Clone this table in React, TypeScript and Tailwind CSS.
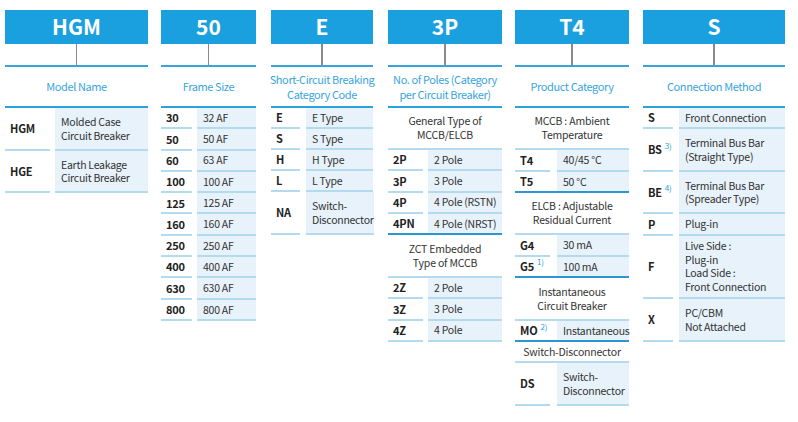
import React from 'react';

type Row =
  | { kind: 'row'; code: string; sup?: string; desc: string[]; h: number; end?: 'dark' }
  | { kind: 'sec'; text: string[]; h: number; end?: 'dark' };

type Column = {
  head: string;
  title: string[];
  w: number;
  ml: number;
  codeW: number;
  gap: number;
  rows: Row[];
};

const r = (code: string, desc: string[], h = 21.3, sup?: string, end?: 'dark'): Row => ({
  kind: 'row',
  code,
  desc,
  h,
  sup,
  end,
});
const s = (text: string[], h: number, end?: 'dark'): Row => ({ kind: 'sec', text, h, end });

const columns: Column[] = [
  {
    head: 'HGM',
    title: ['Model Name'],
    w: 143,
    ml: 5,
    codeW: 45,
    gap: 5,
    rows: [
      r('HGM', ['Molded Case', 'Circuit Breaker'], 43),
      r('HGE', ['Earth Leakage', 'Circuit Breaker'], 42),
    ],
  },
  {
    head: '50',
    title: ['Frame Size'],
    w: 95,
    ml: 13,
    codeW: 31,
    gap: 5,
    rows: [
      ['30', '32 AF'],
      ['50', '50 AF'],
      ['60', '63 AF'],
      ['100', '100 AF'],
      ['125', '125 AF'],
      ['160', '160 AF'],
      ['250', '250 AF'],
      ['400', '400 AF'],
      ['630', '630 AF'],
      ['800', '800 AF'],
    ].map(([c, d]) => r(c, [d])),
  },
  {
    head: 'E',
    title: ['Short-Circuit Breaking', 'Category Code'],
    w: 102,
    ml: 15,
    codeW: 29,
    gap: 6,
    rows: [
      r('E', ['E Type'], 21),
      r('S', ['S Type'], 21),
      r('H', ['H Type'], 21),
      r('L', ['L Type'], 21),
      r('NA', ['Switch-', 'Disconnector'], 43),
    ],
  },
  {
    head: '3P',
    title: ['No. of Poles (Category', 'per Circuit Breaker)'],
    w: 114,
    ml: 15,
    codeW: 35,
    gap: 5,
    rows: [
      s(['General Type of', 'MCCB/ELCB'], 42),
      r('2P', ['2 Pole'], 21.25),
      r('3P', ['3 Pole'], 21.25),
      r('4P', ['4 Pole (RSTN)'], 21.25),
      r('4PN', ['4 Pole (NRST)'], 21.25, undefined, 'dark'),
      s(['ZCT Embedded', 'Type of MCCB'], 43),
      r('2Z', ['2 Pole'], 21.3),
      r('3Z', ['3 Pole'], 21.3),
      r('4Z', ['4 Pole'], 21.3),
    ],
  },
  {
    head: 'T4',
    title: ['Product Category'],
    w: 114,
    ml: 13,
    codeW: 35,
    gap: 7,
    rows: [
      s(['MCCB : Ambient', 'Temperature'], 42),
      r('T4', ['40/45 °C'], 21.5),
      r('T5', ['50 °C'], 21.5, undefined, 'dark'),
      s(['ELCB : Adjustable', 'Residual Current'], 42),
      r('G4', ['30 mA'], 21.5),
      r('G5', ['100 mA'], 21.5, '1)', 'dark'),
      s(['Instantaneous', 'Circuit Breaker'], 43),
      r('MO', ['Instantaneous'], 21, '2)', 'dark'),
      s(['Switch-Disconnector'], 21),
      r('DS', ['Switch-', 'Disconnector'], 43),
    ],
  },
  {
    head: 'S',
    title: ['Connection Method'],
    w: 142,
    ml: 14,
    codeW: 30,
    gap: 6,
    rows: [
      r('S', ['Front Connection'], 21),
      r('BS', ['Terminal Bus Bar', '(Straight Type)'], 43, '3)'),
      r('BE', ['Terminal Bus Bar', '(Spreader Type)'], 42, '4)'),
      r('P', ['Plug-in'], 21.5),
      r('F', ['Live Side :', 'Plug-in', 'Load Side :', 'Front Connection'], 63.5),
      r('X', ['PC/CBM', 'Not Attached'], 43),
    ],
  },
];

function TableRow({ row, col }: { row: Row; col: Column }) {
  const dark = row.end === 'dark';
  if (row.kind === 'sec') {
    return (
      <div
        style={{ height: row.h }}
        className={`flex flex-col items-center justify-center text-center text-[10.5px] leading-[14px] tracking-[-0.2px] text-[#333333] ${
          dark ? 'border-b-2 border-[#2c96d4]' : 'border-b-2 border-[#b3dbef]'
        }`}
      >
        {row.text.map((t) => (
          <div key={t} className="whitespace-nowrap">
            {t}
          </div>
        ))}
      </div>
    );
  }
  const cellLine = dark ? '' : 'border-b-2 border-[#b3dbef]';
  return (
    <div
      style={{ height: row.h, gap: col.gap }}
      className={`flex ${dark ? 'border-b-2 border-[#2c96d4]' : ''}`}
    >
      <div
        style={{ width: col.codeW }}
        className={`flex shrink-0 items-center pl-[5px] text-[11px] font-bold tracking-[-0.2px] text-[#222222] ${cellLine}`}
      >
        {row.code}
        {row.sup && (
          <span className="ml-[3px] -translate-y-[4px] text-[8px] font-normal text-[#2a9fdc]">
            {row.sup}
          </span>
        )}
      </div>
      <div
        className={`flex flex-1 flex-col justify-center bg-[#e8f2fa] pl-[6px] text-[10.5px] leading-[13.5px] tracking-[-0.25px] text-[#333333] ${cellLine}`}
      >
        {row.desc.map((d, i) => (
          <div key={i} className="whitespace-nowrap">
            {d}
          </div>
        ))}
      </div>
    </div>
  );
}

function CodeColumn({ col }: { col: Column }) {
  return (
    <div style={{ width: col.w, marginLeft: col.ml }} className="flex shrink-0 flex-col">
      {/* Code box */}
      <div className="flex h-[34px] items-center justify-center bg-[#1aa0de] text-[21px] font-bold text-white">
        {col.head}
      </div>
      <div className="mx-auto h-[21px] w-[1.5px] bg-[#8a8a8a]" />
      <div className="h-[2px] bg-[#3aa3da]" />
      {/* Title */}
      <div className="flex h-[39px] flex-col items-center justify-center text-center text-[11px] leading-[14.5px] tracking-[-0.4px] text-[#37a5dd]">
        {col.title.map((t) => (
          <div key={t} className="whitespace-nowrap">
            {t}
          </div>
        ))}
      </div>
      <div className="h-[2px] bg-[#2ba2dc]" />
      {col.rows.map((row, i) => (
        <TableRow key={i} row={row} col={col} />
      ))}
    </div>
  );
}

export default function App() {
  return (
    <div
      className="flex h-[422px] w-[798px] items-start bg-white pt-[10px]"
      style={{ fontFamily: '"Noto Sans CJK KR", "Noto Sans", sans-serif' }}
    >
      {columns.map((c) => (
        <CodeColumn key={c.head} col={c} />
      ))}
    </div>
  );
}
